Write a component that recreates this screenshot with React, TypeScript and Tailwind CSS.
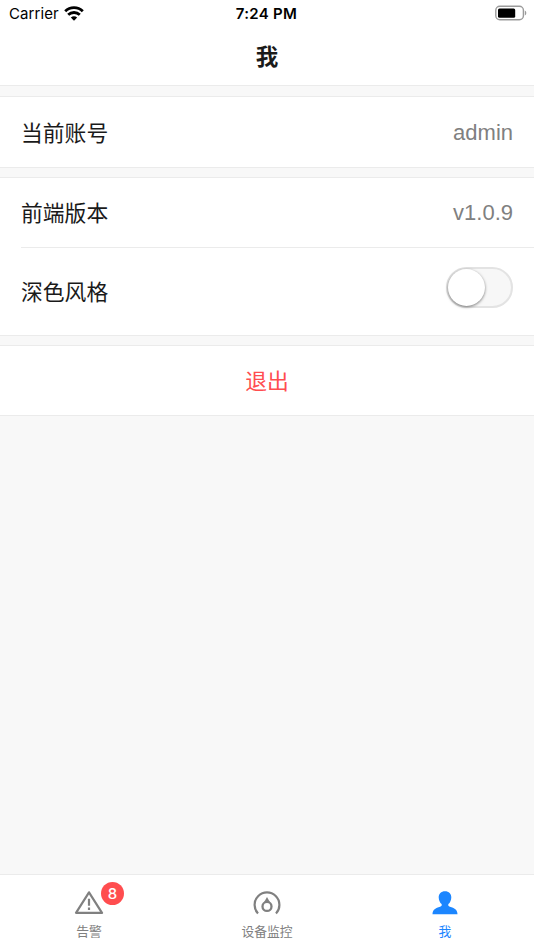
import { useState } from "react";
import type { ReactNode } from "react";

function StatusBar() {
  return (
    <div className="grid h-7 grid-cols-3 items-center pl-[9px] pr-[7px] font-['Inter','Liberation_Sans',sans-serif] text-black">
      <div className="flex items-center gap-[5px]">
        <span className="text-[15px] leading-7 tracking-[0.1px]">Carrier</span>
        <svg width="20" height="15" viewBox="0 0 20 15" className="-mt-0.5">
          <path
            d="M1.2 5.2a12.6 12.6 0 0 1 17.6 0M4.2 8.8a8.4 8.4 0 0 1 11.6 0"
            fill="none"
            stroke="#000"
            strokeWidth="2.8"
          />
          <path d="M6.8 11.6a4.8 4.8 0 0 1 6.4 0L10 14.8z" fill="#000" />
        </svg>
      </div>
      <span className="-ml-[3px] text-center text-[15px] font-semibold leading-7 tracking-[0.3px]">7:24 PM</span>
      <div className="flex justify-end">
        <svg width="32" height="16" viewBox="0 0 32 16" className="-mt-0.5">
          <rect x="0.8" y="1.2" width="27.6" height="13.6" rx="4" fill="none" stroke="#9b9b9b" strokeWidth="1.4" />
          <rect x="3" y="3.4" width="17.2" height="9.4" rx="1.5" fill="#000" />
          <path d="M29.8 5.5v5c2-.7 2-4.3 0-5z" fill="#9b9b9b" />
        </svg>
      </div>
    </div>
  );
}

function Group({ children }: { children: ReactNode }) {
  return <div className="border-y border-[#ebebeb] bg-white">{children}</div>;
}

function Row({ label, value }: { label: string; value: string }) {
  return (
    <div className="flex h-[69px] items-center justify-between px-[21px]">
      <span className="pt-[3px] text-[21.8px] text-[#1a1a1a]">{label}</span>
      <span className="text-[22px] text-[#808080]">{value}</span>
    </div>
  );
}

function Switch({ checked, onChange }: { checked: boolean; onChange: (v: boolean) => void }) {
  return (
    <button
      role="switch"
      aria-checked={checked}
      onClick={() => onChange(!checked)}
      className={`flex h-[41px] w-[67px] items-center rounded-full border-2 ${
        checked ? "justify-end border-[#1c86ff] bg-[#1c86ff]" : "border-[#e3e3e3] bg-[#f7f7f7]"
      }`}
    >
      <span className="size-[37px] rounded-full bg-white shadow-[0_1px_3px_rgba(0,0,0,0.5)]" />
    </button>
  );
}

function Tab({ label, active, children }: { label: string; active?: boolean; children: ReactNode }) {
  return (
    <button className={`flex flex-1 flex-col items-center pt-3 ${active ? "text-[#1c86ff]" : "text-[#808080]"}`}>
      <span className="relative flex h-8 w-8 items-center justify-center">{children}</span>
      <span className="mt-1 text-[12.8px] leading-[18px]">{label}</span>
    </button>
  );
}

export default function App() {
  const [dark, setDark] = useState(false);

  return (
    <div className="flex h-screen flex-col bg-[#f8f8f8] font-['Liberation_Sans','Noto_Sans_CJK_SC',sans-serif]">
      <header className="h-[86px] border-b border-[#ebebeb] bg-white">
        <StatusBar />
        <h1 className="pt-px text-center text-[22.5px] font-bold leading-[57px] text-[#1a1a1a]">我</h1>
      </header>

      <main className="flex flex-1 flex-col gap-[9px] pt-[10px]">
        <Group>
          <div className="pt-px">
            <Row label="当前账号" value="admin" />
          </div>
        </Group>
        <Group>
          <Row label="前端版本" value="v1.0.9" />
          <div className="ml-[21px] flex h-[88px] items-start justify-between border-t border-[#ebebeb] pr-[21px] pt-[19px]">
            <span className="mt-[10px] text-[21.8px] leading-8 text-[#1a1a1a]">深色风格</span>
            <Switch checked={dark} onChange={setDark} />
          </div>
        </Group>
        <Group>
          <button className="h-[69px] w-full pt-1 text-[21.8px] text-[#ff4d4f]">退出</button>
        </Group>
      </main>

      <nav className="flex h-[76px] border-t border-[#ebebeb] bg-white">
        <Tab label="告警">
          <svg width="30" height="24" viewBox="0 0 30 24" fill="none" stroke="currentColor" strokeWidth="2.2">
            <path d="M15 1.3 28 21.8H2z" strokeLinejoin="round" />
            <path d="M15 7.8v7M15 16.5v2.5" />
          </svg>
          <span className="absolute -top-[5px] left-7 flex size-[23px] items-center justify-center rounded-full bg-[#ff4d4f] pt-px font-['Inter','Liberation_Sans',sans-serif] text-[15px] font-medium text-white">
            8
          </span>
        </Tab>
        <Tab label="设备监控">
          <svg width="28" height="24" viewBox="0 0 28 24" fill="none" stroke="currentColor" strokeWidth="2.2">
            <path d="M5 22.4A12.4 12.4 0 1 1 23 22.4" />
            <circle cx="14" cy="15.4" r="4.5" strokeWidth="2.3" />
            <path d="M14 6l3 5.2h-6z" fill="currentColor" stroke="none" />
          </svg>
        </Tab>
        <Tab label="我" active>
          <svg width="26" height="24" viewBox="0 0 26 24" fill="currentColor">
            <path d="M13 .3c3.8 0 6.5 2.600 6.300 6.200-.1 2.900-1.200 5.200-2.900 6.600-.5 1.600.1 2.300 1.500 2.700 4.500 1.300 7.400 2.600 7.600 7.500H.5c.2-4.900 3.100-6.200 7.600-7.500 1.400-.4 2-1.100 1.500-2.700-1.700-1.400-2.800-3.700-2.900-6.600C6.500 2.900 9.200.3 13 .3z" />
          </svg>
        </Tab>
      </nav>
    </div>
  );
}
